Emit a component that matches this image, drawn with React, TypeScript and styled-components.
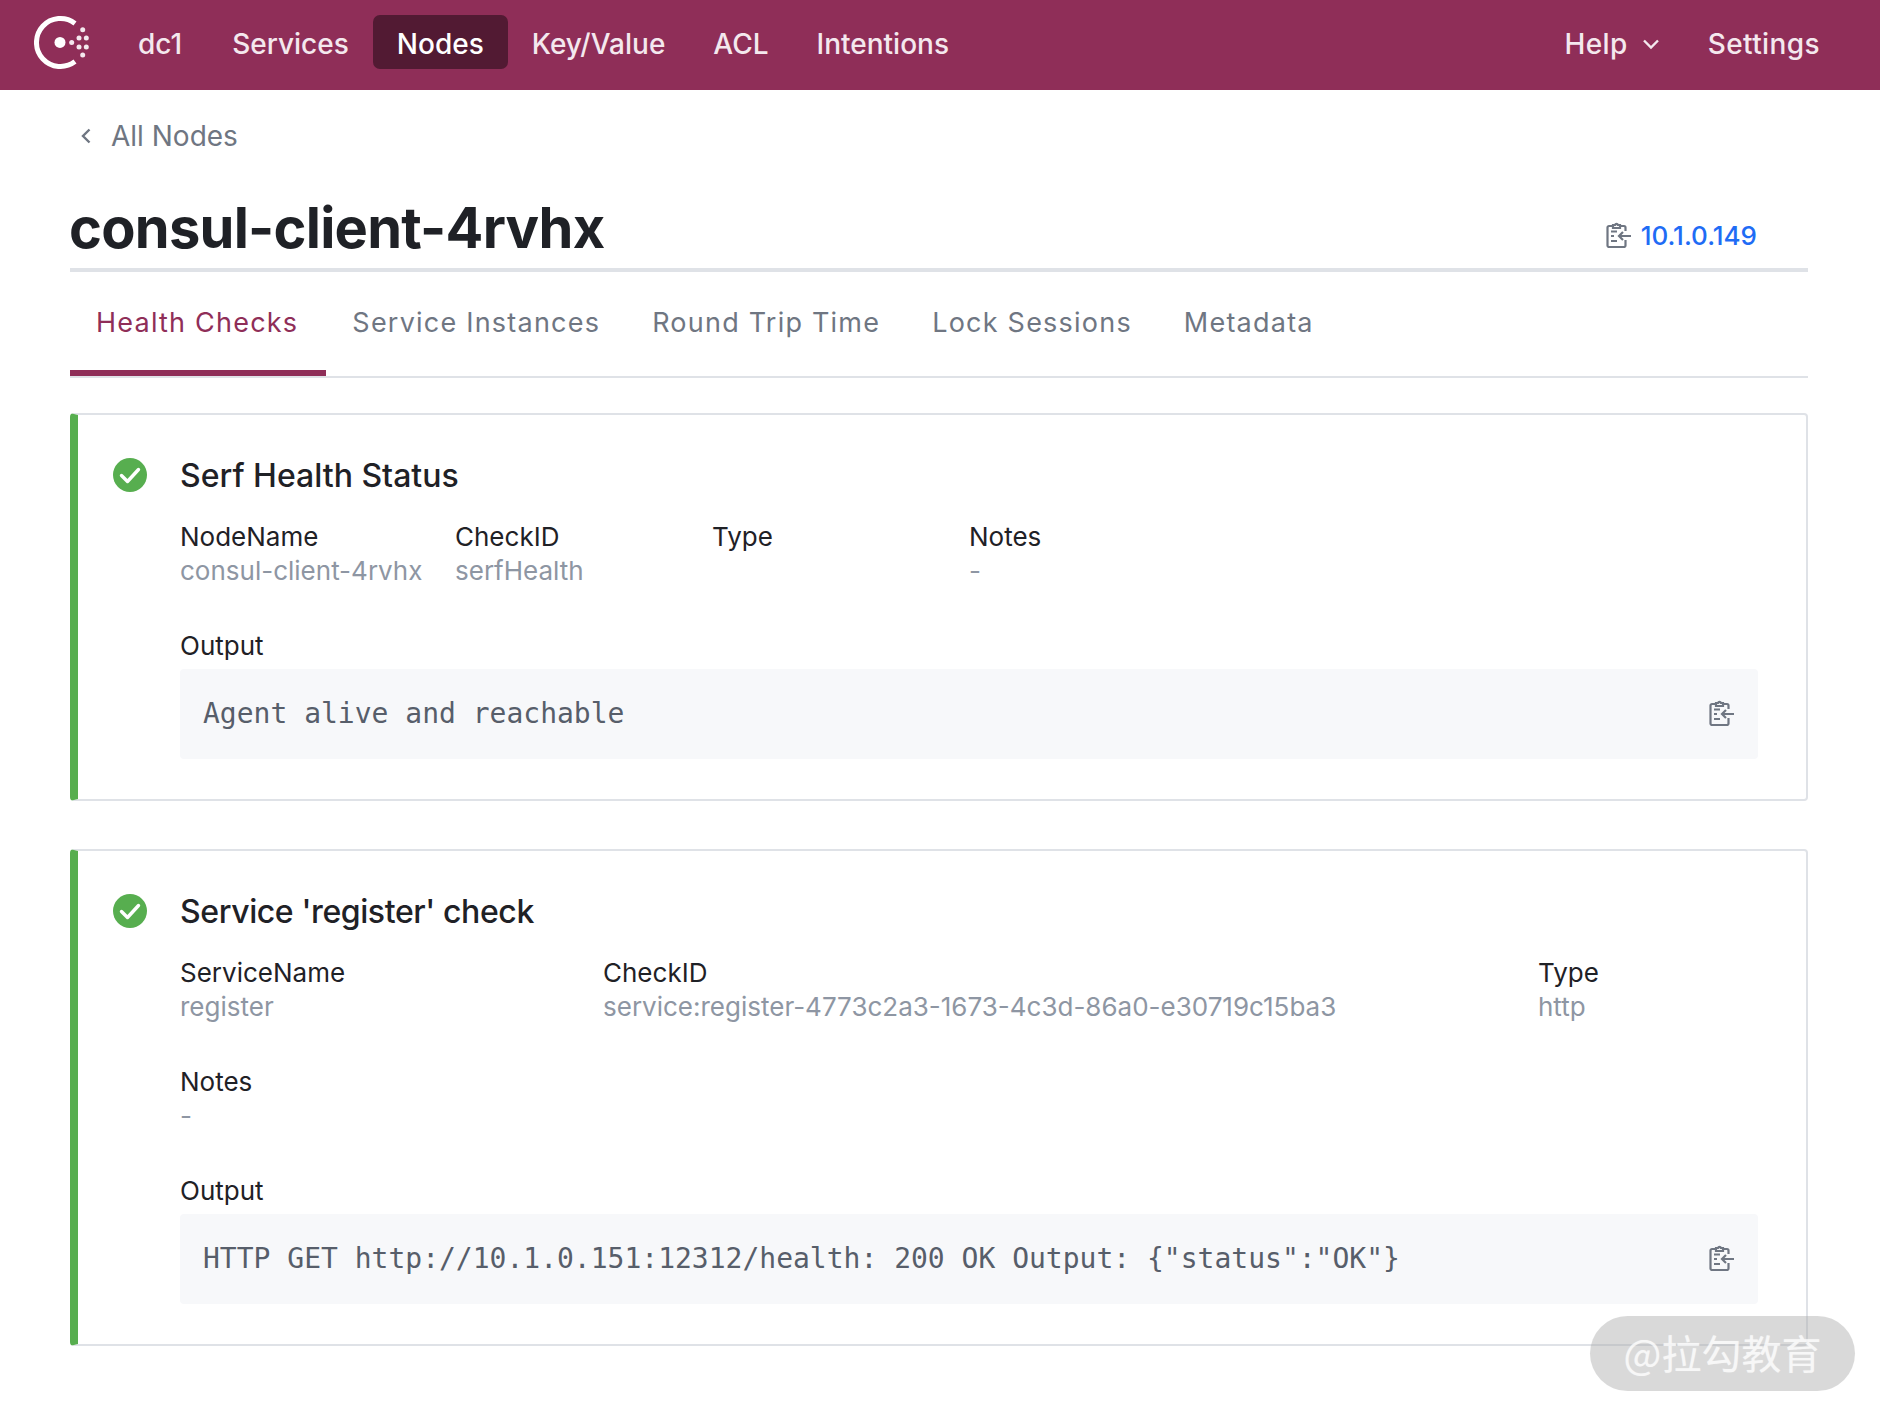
import React from "react";
import styled, { createGlobalStyle } from "styled-components";

const Global = createGlobalStyle`
  html, body { margin: 0; padding: 0; background: #fff; }
  body { font-family: Inter, "Noto Sans", sans-serif; width: 1880px; height: 1416px; overflow: hidden; position: relative; }
`;

const TopBar = styled.header`
  display: flex; align-items: center; box-sizing: border-box; height: 90px; background: #8f2e58; padding: 0 36px 6px 34px;
`;
const LogoMark = styled.svg`width: 56px; height: 55px; margin-right: 24px; flex: none;`;
const NavGroup = styled.nav`
  display: flex; align-items: center;
  & > a:first-child { margin-right: 2px; }
`;
const RightGroup = styled.nav`
  display: flex; align-items: center; margin-left: auto; letter-spacing: 0.4px;
`;
const NavItem = styled.a<{ $active?: boolean }>`
  display: flex; align-items: center; gap: 14px; box-sizing: border-box; height: 54px; padding: 4px 24px 0; border-radius: 7px;
  font-size: 28px; font-weight: 500; line-height: 50px;
  color: ${p => (p.$active ? "#ffffff" : "#f4e8ee")};
  background: ${p => (p.$active ? "#521a33" : "transparent")};
`;
const Main = styled.main`padding: 0 72px 0 70px;`;
const BackLink = styled.a`
  display: flex; align-items: center; height: 44px; margin-top: 24px; padding-left: 11px; gap: 20px;
  font-size: 28px; color: #6f7682;
`;
const TitleRow = styled.div`
  display: flex; justify-content: space-between; align-items: flex-end; height: 110px; border-bottom: 4px solid #dfe2e7;
`;
const Title = styled.h1`margin: 0 0 8px -1px; font-size: 56px; line-height: 64px; font-weight: 700; color: #1f2126; letter-spacing: -0.75px;`;
const Address = styled.div`
  display: flex; align-items: center; gap: 10px; padding-right: 51px; margin-bottom: 16px;
  font-size: 26px; line-height: 32px; font-weight: 500; color: #1f6cf5;
`;
const Tabs = styled.nav`display: flex; border-bottom: 2px solid #dfe2e7; margin-bottom: 35px;`;
const Tab = styled.a<{ $active?: boolean }>`
  padding: 33px ${p => (p.$active ? "28px" : "26px")} 29px 26px; line-height: 36px; font-size: 27px; letter-spacing: 1.22px;
  color: ${p => (p.$active ? "#8f2e58" : "#6f7682")};
  border-bottom: 6px solid ${p => (p.$active ? "#8f2e58" : "transparent")};
`;
const Card = styled.section`
  display: grid; grid-template-columns: 67px 1fr; padding: 41px 48px 40px 35px;
  border: 2px solid #dfe2e7; border-left: 8px solid #57ae4f; border-radius: 4px;
  & + & { margin-top: 48px; }
`;
const StatusIcon = styled.svg`width: 36px; height: 36px; margin: 1px 0 0 -1px;`;
const CardBody = styled.div`display: flex; flex-direction: column;`;
const CardTitle = styled.h2<{ $tracking: string }>`
  margin: 0 0 24px; font-size: 32px; line-height: 40px; font-weight: 500; color: #1f2126; letter-spacing: ${p => p.$tracking};
`;
const Fields = styled.dl<{ $columns: string }>`
  display: grid; grid-template-columns: ${p => p.$columns}; row-gap: 41px; margin: 0 0 41px;
`;
const Field = styled.div``;
const Label = styled.dt`font-size: 26px; line-height: 34px; color: #1f2126;`;
const Value = styled.dd`margin: 0; font-size: 26px; line-height: 34px; color: #8e96a3;`;
const OutputLabel = styled.div`font-size: 26px; line-height: 34px; color: #1f2126; margin-bottom: 6px;`;
const OutputBox = styled.div`
  display: flex; align-items: center; justify-content: space-between; height: 90px; padding: 0 24px 0 23px;
  background: #f7f8fa; border-radius: 4px;
`;
const Code = styled.code`font-family: "DejaVu Sans Mono", "Liberation Mono", monospace; font-size: 28px; color: #575e6a; margin-top: -2px;`;
const CopyGlyph = styled.svg`width: 25px; height: 26px; flex: none; margin-top: -2px;`;
const Watermark = styled.div`
  position: absolute; left: 1590px; top: 1316px; box-sizing: border-box; width: 265px; height: 75px; padding-bottom: 4px; border-radius: 38px;
  display: flex; align-items: center; justify-content: center; background: rgba(170,170,170,.45);
  font-family: "Noto Sans CJK SC", sans-serif; font-size: 40px; color: rgba(255,255,255,.65); text-shadow: 0 0 1px rgba(255,255,255,.5);
`;

const Copy = () => (
  <CopyGlyph viewBox="0 0 25 26" fill="none" stroke="#6f7682" strokeWidth="2.2">
    <path d="M7 4H3a1.5 1.5 0 0 0-1.5 1.5v18A1.5 1.5 0 0 0 3 25h15a1.5 1.5 0 0 0 1.5-1.5V18M19.5 9V5.5A1.5 1.5 0 0 0 18 4h-4" />
    <path d="M7 6V3h2a1.6 1.6 0 0 1 3 0h2v3z" />
    <path d="M5 9.5h6M5 14h3M5 19h6M25 14H13M17 10l-4 4 4 4" />
  </CopyGlyph>
);
const Check = () => (
  <StatusIcon viewBox="0 0 36 36">
    <circle cx="18" cy="18" r="17" fill="#57ae4f" />
    <path d="M9.5 18.5l6 6 11-12" fill="none" stroke="#fff" strokeWidth="3.4" strokeLinecap="round" strokeLinejoin="round" />
  </StatusIcon>
);
const Logo = () => (
  <LogoMark viewBox="34 15 56 55">
    <path d="M75 23.4A24 24 0 1 0 75 61.6" fill="none" stroke="#fff" strokeWidth="5" />
    <circle cx="60" cy="42.4" r="5.5" fill="#fff" />
    <g fill="#f4e8ee">
      <circle cx="71.7" cy="42.4" r="2.5" />
      <circle cx="82.7" cy="29.7" r="2.5" />
      <circle cx="79" cy="38" r="2.5" />
      <circle cx="86.3" cy="38" r="2.5" />
      <circle cx="79" cy="47" r="2.5" />
      <circle cx="86.3" cy="47" r="2.5" />
      <circle cx="82.7" cy="55" r="2.5" />
    </g>
  </LogoMark>
);

type F = [string, string];
const HealthCard = ({ title, tracking = "0", columns, fields, output }: { title: string; tracking?: string; columns: string; fields: F[]; output: string }) => (
  <Card>
    <Check />
    <CardBody>
      <CardTitle $tracking={tracking}>{title}</CardTitle>
      <Fields $columns={columns}>
        {fields.map(([k, v]) => (
          <Field key={k}>
            <Label>{k}</Label>
            <Value>{v || "\u00a0"}</Value>
          </Field>
        ))}
      </Fields>
      <OutputLabel>Output</OutputLabel>
      <OutputBox>
        <Code>{output}</Code>
        <Copy />
      </OutputBox>
    </CardBody>
  </Card>
);

export default function App() {
  return (
    <>
      <Global />
      <TopBar>
        <Logo />
        <NavGroup>
          {["dc1", "Services", "Nodes", "Key/Value", "ACL", "Intentions"].map(n => (
            <NavItem key={n} $active={n === "Nodes"}>{n}</NavItem>
          ))}
        </NavGroup>
        <RightGroup>
          <NavItem>
            Help
            <svg width="18" height="12" viewBox="0 0 18 12" fill="none" stroke="#f4e8ee" strokeWidth="2.4"><path d="M2 2.5l7 7 7-7" /></svg>
          </NavItem>
          <NavItem>Settings</NavItem>
        </RightGroup>
      </TopBar>
      <Main>
        <BackLink>
          <svg width="10" height="16" viewBox="0 0 10 16" fill="none" stroke="#6f7682" strokeWidth="2.4"><path d="M8.5 1.5L2 8l6.5 6.5" /></svg>
          All Nodes
        </BackLink>
        <TitleRow>
          <Title>consul-client-4rvhx</Title>
          <Address><Copy />10.1.0.149</Address>
        </TitleRow>
        <Tabs>
          <Tab $active>Health Checks</Tab>
          <Tab>Service Instances</Tab>
          <Tab>Round Trip Time</Tab>
          <Tab>Lock Sessions</Tab>
          <Tab>Metadata</Tab>
        </Tabs>
        <HealthCard
          title="Serf Health Status"
          columns="275px 257px 257px 1fr"
          fields={[["NodeName", "consul-client-4rvhx"], ["CheckID", "serfHealth"], ["Type", ""], ["Notes", "-"]]}
          output="Agent alive and reachable"
        />
        <HealthCard
          title="Service 'register' check"
          tracking="-0.4px"
          columns="423px 935px 1fr"
          fields={[["ServiceName", "register"], ["CheckID", "service:register-4773c2a3-1673-4c3d-86a0-e30719c15ba3"], ["Type", "http"], ["Notes", "-"]]}
          output={'HTTP GET http://10.1.0.151:12312/health: 200 OK Output: {"status":"OK"}'}
        />
      </Main>
      <Watermark>@拉勾教育</Watermark>
    </>
  );
}
